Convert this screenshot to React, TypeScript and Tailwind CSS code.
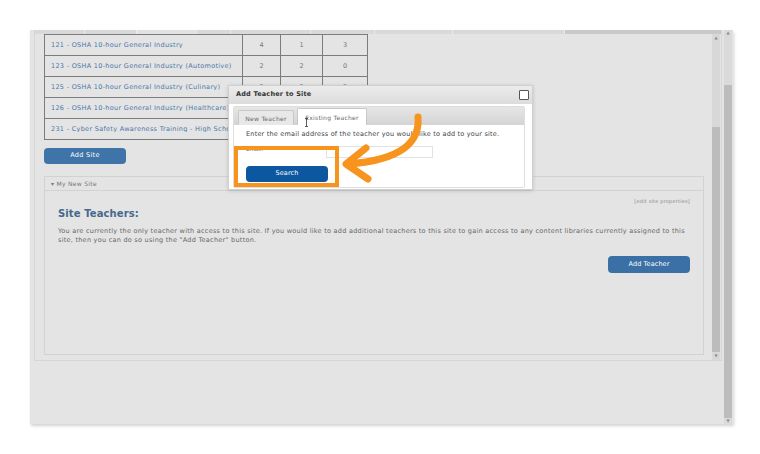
import React from 'react';

// rows 126 and 231 sit under the dialog, so their number cells stay blank
const rows = [
  { name: '121 - OSHA 10-hour General Industry', a: '4', b: '1', c: '3', clip: false },
  { name: '123 - OSHA 10-hour General Industry (Automotive)', a: '2', b: '2', c: '0', clip: false },
  { name: '125 - OSHA 10-hour General Industry (Culinary)', a: '2', b: '2', c: '2', clip: false },
  { name: '126 - OSHA 10-hour General Industry (Healthcare)', a: '', b: '', c: '', clip: true },
  { name: '231 - Cyber Safety Awareness Training - High School', a: '', b: '', c: '', clip: true },
];

const CourseTable = () => (
  <table className="ml-[9px] border-collapse border border-[#7c7c7c] text-[6.5px] leading-none">
    <tbody>
      {rows.map((r) => (
        <tr key={r.name} className="h-[21px]">
          <td className="w-[198px] border border-[#7c7c7c] pl-[6px]">
            <span
              className={
                r.clip
                  ? 'block w-[177px] overflow-hidden whitespace-nowrap tracking-[0.3px] text-[#4a78a8] underline'
                  : 'block w-[190px] overflow-hidden whitespace-nowrap tracking-[0.3px] text-[#4a78a8] underline'
              }
            >
              {r.name}
            </span>
          </td>
          <td className="w-[38px] border border-[#7c7c7c] text-center text-[#777]">{r.a}</td>
          <td className="w-[42px] border border-[#7c7c7c] text-center text-[#777]">{r.b}</td>
          <td className="w-[45px] border border-[#7c7c7c] text-center text-[#777]">{r.c}</td>
        </tr>
      ))}
    </tbody>
  </table>
);

const SitePanel = () => (
  <div className="ml-[9px] mr-[8px] mt-[12px] h-[179px] border border-[#d2d2d2]">
    <div className="flex h-[14px] items-center border-b border-[#d2d2d2] pl-[6px] text-[6px] tracking-[0.3px] text-[#777]">
      ▾ My New Site
    </div>
    <div className="px-[13px]">
      <div className="pt-[7px] text-right text-[5px] leading-[6px] tracking-[0.2px] text-[#888]">[edit site properties]</div>
      <h2 className="mt-[4px] text-[10px] font-bold leading-[12px] tracking-[0.1px] text-[#44698c]">Site Teachers:</h2>
      <p className="mt-[7px] text-[6.5px] leading-[9px] tracking-[0.26px] text-[#666]">
        You are currently the only teacher with access to this site. If you would like to add additional teachers to this site to gain access to any content libraries currently assigned to this site, then you can do so using the "Add Teacher" button.
      </p>
      <div className="mt-[11px] flex justify-end">
        <button className="h-[17px] w-[82px] rounded-[4px] bg-[#3b70a6] text-[6.5px] tracking-[0.1px] text-white">Add Teacher</button>
      </div>
    </div>
  </div>
);

const Dialog = () => (
  <div className="absolute left-[228px] top-[85px] h-[105px] w-[305px] border border-[#cfcfcf] bg-white shadow-[0_1px_4px_rgba(0,0,0,0.15)]">
    <div className="flex h-[18px] items-center justify-between bg-gradient-to-b from-[#ececec] to-[#dcdcdc] pl-[7px] pr-[3px]">
      <span className="text-[6.5px] font-bold tracking-[0.2px] text-[#333]">Add Teacher to Site</span>
      <span className="h-[10px] w-[10px] rounded-[1px] border border-[#555] bg-white" />
    </div>
    <div className="mx-[4px] mt-[2px] h-[82px] w-[292px] rounded-[2px] border border-[#dedede]">
      <div className="flex h-[18px] items-end gap-[3px] bg-gradient-to-b from-[#e6e6e6] to-[#d4d4d4] pl-[4px]">
        <div className="flex h-[15px] w-[56px] items-center justify-center rounded-t-[2px] border border-b-0 border-[#c8c8c8] bg-[#e8e8e8] text-[6px] tracking-[0.3px] text-[#666]">
          New Teacher
        </div>
        <div className="relative flex h-[17px] w-[70px] items-center justify-center rounded-t-[2px] border border-b-0 border-[#c8c8c8] bg-white text-[6px] tracking-[0.3px] text-[#666]">
          Existing Teacher
          <svg className="absolute left-[6px] top-[9px]" width="5" height="9" viewBox="0 0 5 9">
            <path d="M1 0.5 H4 M2.5 0.5 V8.5 M1 8.5 H4" stroke="#333" strokeWidth="0.8" fill="none" />
          </svg>
        </div>
      </div>
      <div className="pl-[12px] pt-[5px]">
        <p className="text-[6.5px] leading-[8px] tracking-[0.2px] text-[#444]">
          Enter the email address of the teacher you would like to add to your site.
        </p>
        <div className="mt-[8px] flex h-[12px] items-start">
          <span className="w-[80px] text-[5.5px] leading-[6px] text-[#666]">Email:</span>
          <span className="h-[12px] w-[107px] border border-[#e2e2e2] bg-white" />
        </div>
        <button className="mt-[2px] h-[16px] w-[82px] rounded-[4px] bg-[#0d57a1] text-[6.5px] tracking-[0.1px] text-white">Search</button>
      </div>
    </div>
  </div>
);

const Annotation = () => (
  <>
    <div className="absolute left-[234px] top-[146px] h-[41px] w-[105px] border-[4px] border-[#f7941e]" />
    <svg className="absolute left-[330px] top-[100px]" width="110" height="90" viewBox="0 0 110 90">
      <path d="M88 17 C 90 42, 72 60, 18 64" stroke="#f7941e" strokeWidth="7" strokeLinecap="round" fill="none" />
      <path d="M36 48 L16 64 L38 79" stroke="#f7941e" strokeWidth="7" strokeLinecap="round" strokeLinejoin="round" fill="none" />
    </svg>
  </>
);

const App = () => {
  return (
    <div className="relative min-h-screen bg-white font-['DejaVu_Sans',sans-serif]">
      <div className="pl-[30px] pt-[30px]">
        <div className="flex h-[394px] w-[703px] bg-[#e4e4e4] shadow-[1px_2px_3px_rgba(0,0,0,0.18)]">
          <div className="flex-1 pl-[4px] pr-[2px]">
            <div className="flex h-[331px] flex-col border-x border-b border-[#d6d6d6]">
              <div className="flex h-[4px] bg-[#d9d9d9]">
                <div className="w-[50px] border-r border-[#ececec]" />
                <div className="w-[52px] border-r border-[#ececec]" />
                <div className="w-[60px] border-r border-[#e8e8e8] bg-[#e2e2e2]" />
                <div className="w-[34px] border-r border-[#ececec]" />
                <div className="w-[80px] border-r border-[#ececec]" />
                <div className="w-[64px] border-r border-[#ececec]" />
                <div className="w-[78px] border-r border-[#ececec]" />
                <div className="w-[112px] border-r border-[#ececec]" />
                <div className="flex-1 bg-[#c9c9c9]" />
              </div>
              <div className="flex flex-1">
                <div className="flex-1">
                  <CourseTable />
                  <button className="ml-[9px] mt-[7px] h-[16px] w-[82px] rounded-[4px] bg-[#3f74a8] text-[6.5px] tracking-[0.3px] text-white">
                    Add Site
                  </button>
                  <SitePanel />
                </div>
                <div className="mr-[1px] flex w-[8px] flex-col bg-[#d8d8d8]">
                  <div className="flex h-[8px] items-center justify-center text-[4px] text-[#888]">▲</div>
                  <div className="mt-[85px] flex-1 bg-[#bcbcbc]" />
                  <div className="flex h-[8px] items-center justify-center text-[4px] text-[#888]">▼</div>
                </div>
              </div>
            </div>
          </div>
          <div className="mr-[1px] flex w-[8px] flex-col bg-[#dadada]">
            <div className="flex h-[6px] items-center justify-center text-[4px] text-[#888]">▲</div>
            <div className="mt-[49px] flex-1 bg-[#bcbcbc]" />
            <div className="flex h-[6px] items-center justify-center text-[4px] text-[#888]">▼</div>
          </div>
        </div>
      </div>
      <Dialog />
      <Annotation />
    </div>
  );
};

export default App;
